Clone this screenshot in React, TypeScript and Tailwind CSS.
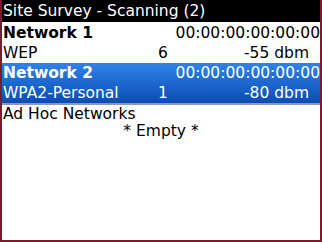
const FONT = { fontFamily: '"DejaVu Sans", "Liberation Sans", sans-serif' };

type Net = {
  name: string;
  mac: string;
  security: string;
  channel: string;
  signal: string;
  selected?: boolean;
};

const networks: Net[] = [
  { name: 'Network 1', mac: '00:00:00:00:00:00', security: 'WEP', channel: '6', signal: '-55 dbm' },
  { name: 'Network 2', mac: '00:00:00:00:00:00', security: 'WPA2-Personal', channel: '1', signal: '-80 dbm', selected: true }
];

function NetworkRow({ net }: { net: Net }) {
  return (
    <div
      className={`flex h-[40px] flex-col pl-px ${
        net.selected ? 'bg-gradient-to-b from-[#2f83ea] to-[#0b4cb3] text-white' : 'bg-white text-black'
      }`}
    >
      <div className="flex h-[20px] items-center justify-between">
        <span className="font-bold">{net.name}</span>
        <span>{net.mac}</span>
      </div>
      <div className="flex h-[20px] items-center">
        <span className="w-[155px]">{net.security}</span>
        <span>{net.channel}</span>
        <span className="flex-1 pr-[11px] text-right">{net.signal}</span>
      </div>
    </div>
  );
}

export default function App() {
  return (
    <div
      className="flex h-[242px] w-[322px] flex-col overflow-hidden border-x-2 border-b-2 border-[#7a1c2c] bg-white text-[15.5px] leading-[20px] text-black"
      style={FONT}
    >
      <div className="flex h-[22px] shrink-0 items-center bg-black pl-px text-white">Site Survey - Scanning (2)</div>
      <div className="pt-px">
        {networks.map((n) => (
          <NetworkRow key={n.name} net={n} />
        ))}
      </div>
      <div className="h-[2px] bg-[#8d9aae]" />
      <div className="flex h-[17px] items-center pl-px">Ad Hoc Networks</div>
      <div className="flex h-[17px] items-center justify-center">* Empty *</div>
    </div>
  );
}
